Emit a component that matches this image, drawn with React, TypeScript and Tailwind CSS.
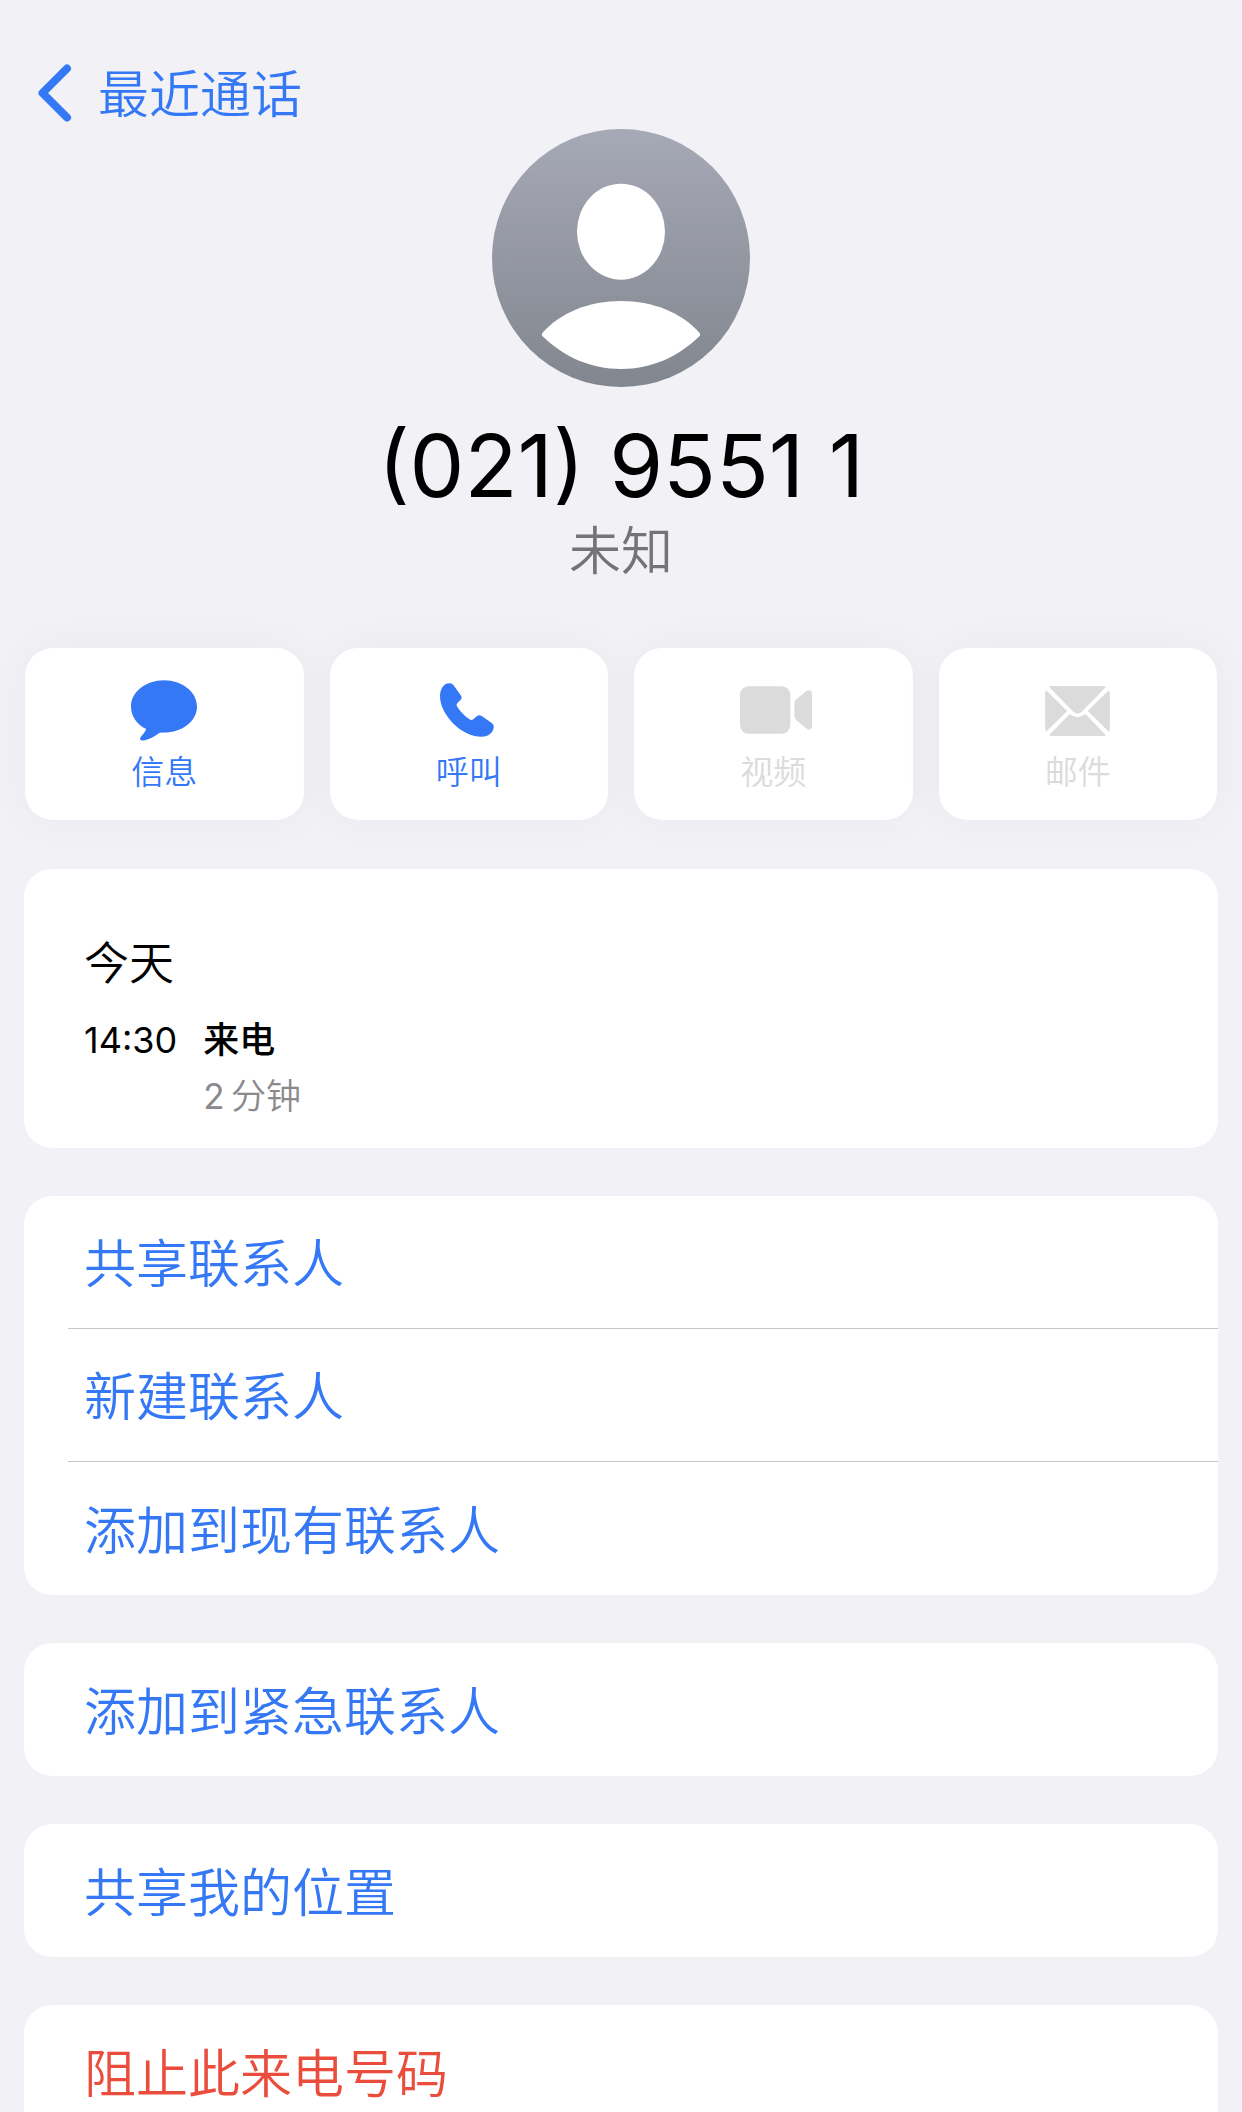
import type { ReactNode } from "react";
import clsx from "clsx";

interface QuickAction {
  label: string;
  icon: ReactNode;
  disabled?: boolean;
}

interface ActionItem {
  label: string;
  danger?: boolean;
}

function BackIcon() {
  return (
    <svg className="w-[34px] h-[58px]" viewBox="0 0 34 58" fill="none">
      <path
        d="M29 4.5L4.5 29L29 53.5"
        stroke="currentColor"
        strokeWidth="8"
        strokeLinecap="round"
        strokeLinejoin="round"
      />
    </svg>
  );
}

function Avatar() {
  return (
    <svg className="w-[258px] h-[258px]" viewBox="0 0 774 774">
      <defs>
        <linearGradient id="avatar" x1="0" y1="0" x2="0" y2="1">
          <stop offset="0" stopColor="#a6a9b6" />
          <stop offset="1" stopColor="#82868e" />
        </linearGradient>
      </defs>
      <circle cx="387" cy="387" r="387" fill="url(#avatar)" />
      <ellipse cx="387" cy="308" rx="132" ry="144" fill="#fff" />
      <path
        d="M151 612C206 550 292 516 387 516S568 550 623 612Q626 617 623 621C558 684 478 720 387 720S216 684 151 621Q148 617 151 612Z"
        fill="#fff"
      />
    </svg>
  );
}

function MessageIcon() {
  return (
    <svg className="w-[66px] h-[61px]" viewBox="0 0 200 184" fill="currentColor">
      <path d="M100 0C155 0 200 35 200 80S155 159 100 159Q94 160 88 159C74 169 56 181 38 183C28 184 24 178 31 170C38 163 43 156 46 148C18 135 0 110 0 80C0 35 45 0 100 0Z" />
    </svg>
  );
}

function PhoneIcon() {
  return (
    <svg className="w-[57px] h-[54px]" viewBox="0 0 172 163" fill="currentColor">
      <path d="M0 40C0 18 12 1 26 1C34 0 39 3 42 8L62 36C67 43 66 47 61 52L54 59C49 64 49 68 53 73C62 87 75 100 88 109C93 113 97 113 101 109L110 101C116 96 120 96 127 100L154 119C161 124 163 127 162 135C160 150 146 162 126 162C60 162 0 92 0 40Z" />
    </svg>
  );
}

function VideoIcon() {
  return (
    <svg className="w-[78px] h-[48px]" viewBox="-18 0 234 144" fill="currentColor">
      <rect y="1" width="151" height="142" rx="26" />
      <path d="M163 53Q163 45 169 40L198 16Q207 10 212 14Q216 17 216 24V120Q216 127 212 130Q206 133 198 127L169 103Q163 98 163 91Z" />
    </svg>
  );
}

function MailIcon() {
  return (
    <svg className="w-[65px] h-[52px]" viewBox="0 -6 194 156" fill="currentColor">
      <path d="M12 3Q15 0 20 0H174Q179 0 182 3L111 76Q97 90 83 76Z" />
      <path d="M0 22Q0 16 3 13L66 75L3 137Q0 134 0 128Z" />
      <path d="M194 22Q194 16 191 13L128 75L191 137Q194 134 194 128Z" />
      <path d="M12 147L74 84Q97 104 120 84L182 147Q179 150 174 150H20Q15 150 12 147Z" />
    </svg>
  );
}

const quickActions: QuickAction[] = [
  { label: "信息", icon: <MessageIcon /> },
  { label: "呼叫", icon: <PhoneIcon /> },
  { label: "视频", icon: <VideoIcon />, disabled: true },
  { label: "邮件", icon: <MailIcon />, disabled: true },
];

const actionGroups: ActionItem[][] = [
  [{ label: "共享联系人" }, { label: "新建联系人" }, { label: "添加到现有联系人" }],
  [{ label: "添加到紧急联系人" }],
  [{ label: "共享我的位置" }],
  [{ label: "阻止此来电号码", danger: true }],
];

function ActionGroup({ items }: { items: ActionItem[] }) {
  return (
    <ul className="bg-white rounded-[28px] pl-11 overflow-hidden">
      {items.map((item, index) => (
        <li
          key={item.label}
          className={clsx(
            "h-[133px]",
            index < items.length - 1 && "border-b border-[#c6c6c8]"
          )}
        >
          <button
            type="button"
            className={clsx(
              "w-full h-full pl-4 pt-1.5 text-left text-[52px] leading-[60px] font-[350]",
              item.danger ? "text-[#eb4d3d]" : "text-[#3478f6]"
            )}
          >
            {item.label}
          </button>
        </li>
      ))}
    </ul>
  );
}

export default function App() {
  return (
    <div className="h-screen overflow-y-auto [scrollbar-width:none] bg-[#f1f1f6] text-black font-['Inter','Noto_Sans_CJK_SC',sans-serif]">
      <header className="pt-[57px] pl-[38px]">
        <a href="#recents" className="inline-flex items-center h-[72px] gap-[26px] text-[#3478f6]">
          <BackIcon />
          <span className="pt-1 text-[51px] leading-[60px] font-[350]">最近通话</span>
        </a>
      </header>

      <main className="px-6 pb-12">
        <section className="flex flex-col items-center">
          <Avatar />
          <h1 className="mt-[31px] text-[87px] leading-[96px]">(021) 9551 1</h1>
          <p className="mt-2 text-[52px] leading-[60px] font-[350] text-[#747477]">未知</p>
        </section>

        <div className="mt-[66px] px-px grid grid-cols-4 gap-[26px]">
          {quickActions.map((action) => (
            <button
              key={action.label}
              type="button"
              disabled={action.disabled}
              className={clsx(
                "h-[172px] flex flex-col items-center pt-[31px] bg-white rounded-[28px] shadow-[0_0_48px_rgba(0,0,0,0.04)]",
                action.disabled ? "text-[#dbdbdb]" : "text-[#3478f6]"
              )}
            >
              <span className="h-[62px] flex items-center">{action.icon}</span>
              <span className="mt-[11px] text-[33px] leading-10 font-[350]">{action.label}</span>
            </button>
          ))}
        </div>

        <div className="mt-[49px] flex flex-col gap-12">
          <section className="bg-white rounded-[28px] pt-[67px] pb-6 px-[60px]">
            <h2 className="text-[45px] leading-14 font-[350]">今天</h2>
            <div className="mt-5 flex gap-[26px] text-[36px] leading-14">
              <time>14:30</time>
              <div>
                <p className="font-medium">来电</p>
                <p className="text-[35px] font-[350] text-[#8a8a8d]">
                  <span className="font-normal">2</span>
                  {"\u2009"}分钟
                </p>
              </div>
            </div>
          </section>

          {actionGroups.map((items) => (
            <ActionGroup key={items[0].label} items={items} />
          ))}
        </div>
      </main>
    </div>
  );
}
